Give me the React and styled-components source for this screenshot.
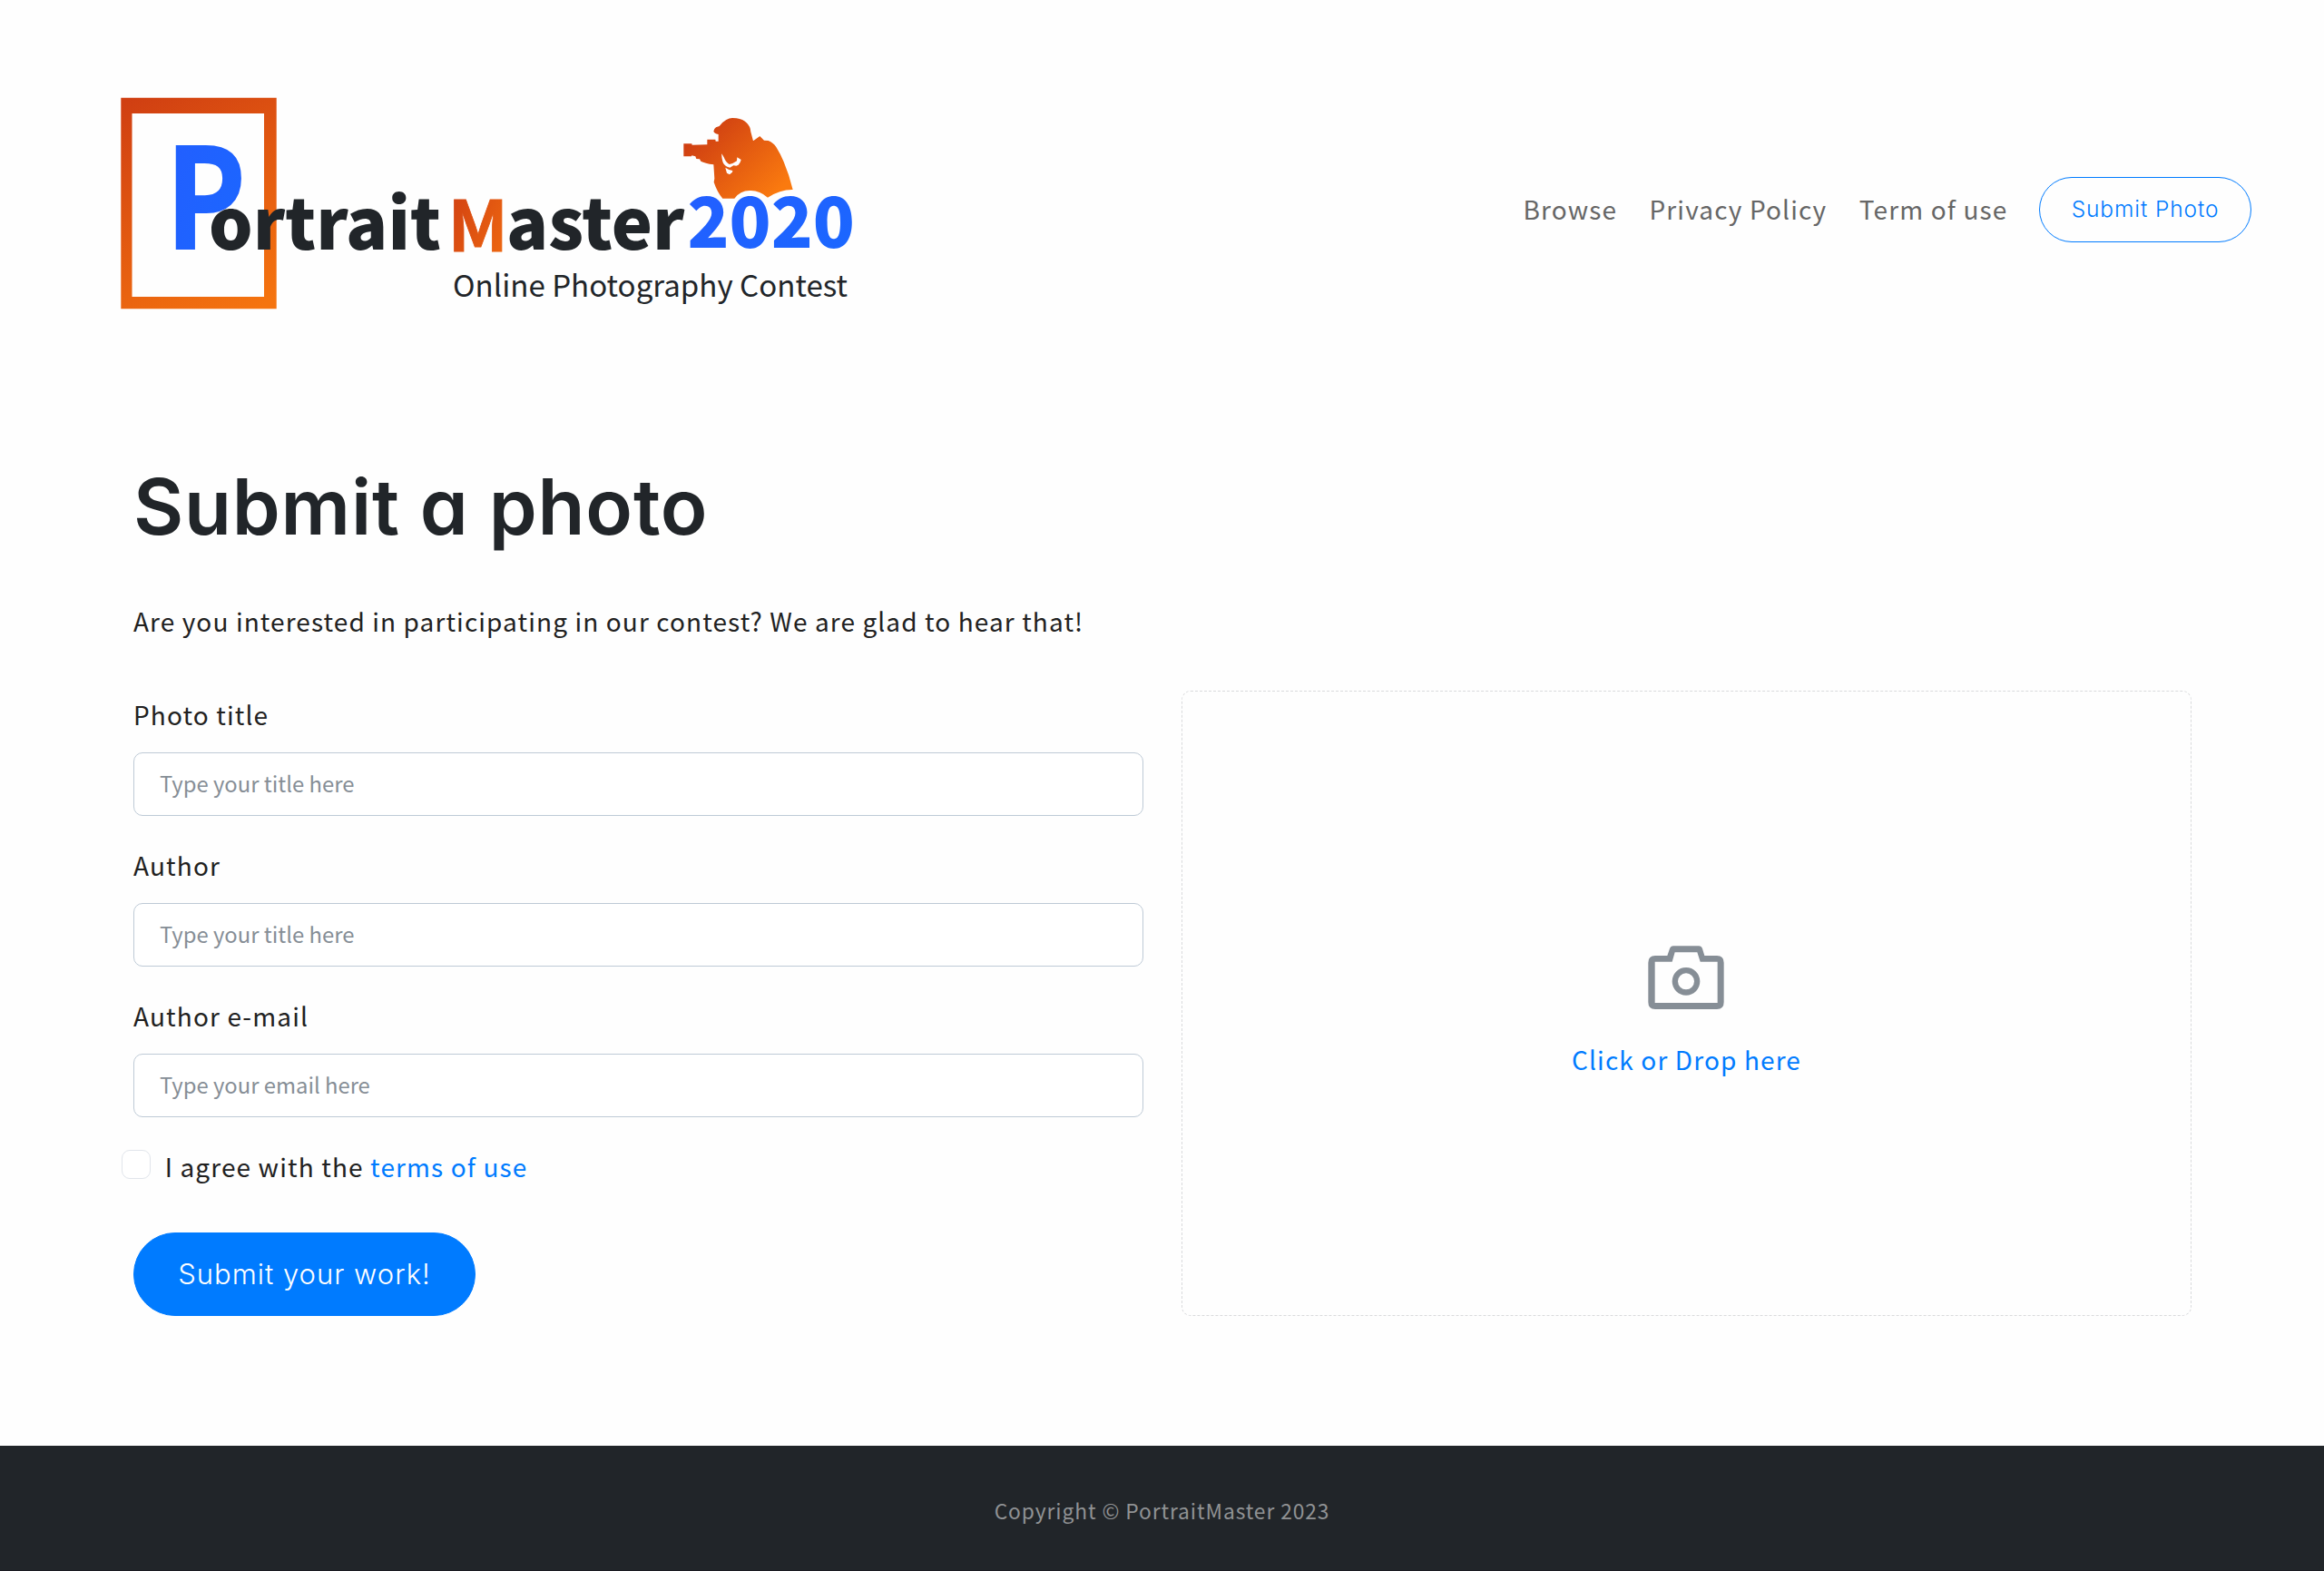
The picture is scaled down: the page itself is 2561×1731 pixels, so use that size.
import React from "react";
import styled, { createGlobalStyle } from "styled-components";

const sans = '"Noto Sans CJK JP", "Noto Sans", sans-serif';
const display = 'Inter, "Liberation Sans", sans-serif';

const GlobalStyle = createGlobalStyle`
  *, *::before, *::after { box-sizing: border-box; }
  body {
    margin: 0;
    background: #fefefe;
    color: #212121;
    font-family: ${sans};
    font-size: 28px;
    line-height: 40px;
    letter-spacing: 1.13px;
  }
`;

const Page = styled.div`
  display: flex;
  flex-direction: column;
  min-height: 1731px;
`;

const Header = styled.header`
  display: flex;
  align-items: center;
  justify-content: space-between;
  height: 462px;
  padding: 0 80px 0 130px;
`;

const LogoSvg = styled.svg`
  display: block;
  width: 820px;
  height: 262px;
  overflow: visible;
  font-family: ${sans};
  letter-spacing: 0;
`;

const Nav = styled.nav`
  display: flex;
  align-items: center;
  gap: 35.4px;
`;

const NavLink = styled.a`
  padding-bottom: 3px;
  color: #666;
  text-decoration: none;
  white-space: nowrap;
`;

const Pill = styled.button`
  display: flex;
  align-items: center;
  justify-content: center;
  padding: 0 0 2px;
  border: 1px solid #007bff;
  border-radius: 46px;
  font-family: ${display};
  font-weight: 300;
  white-space: nowrap;
`;

const OutlinePill = styled(Pill)`
  width: 234px;
  height: 72px;
  margin-left: -0.8px;
  background: transparent;
  color: #007bff;
  font-size: 24.5px;
  letter-spacing: 0.9px;
`;

const SolidPill = styled(Pill)`
  width: 377px;
  height: 92px;
  margin-top: auto;
  background: #007bff;
  color: #fff;
  font-size: 31px;
  letter-spacing: 1px;
`;

const Main = styled.main`
  flex: 1;
  padding: 47px 146px 0 147px;
`;

const Title = styled.h1`
  margin: 0;
  color: #212529;
  font-family: ${display};
  font-feature-settings: "cv11";
  font-size: 85px;
  font-weight: 600;
  line-height: 100px;
  letter-spacing: 0.75px;
`;

const Lead = styled.p`
  margin: 55px 0 0;
  letter-spacing: 1.1px;
`;

const FormGrid = styled.form`
  display: grid;
  grid-template-columns: 1fr 1fr;
  column-gap: 42px;
  height: 689px;
  margin-top: 57px;
`;

const Fields = styled.div`
  display: flex;
  flex-direction: column;
  align-items: flex-start;
  padding-top: 6px;
`;

const Field = styled.label`
  display: flex;
  flex-direction: column;
  gap: 22px;
  width: 100%;
  margin-bottom: 34px;
`;

const Input = styled.input`
  width: 100%;
  height: 70px;
  padding: 0 28px 3px;
  border: 1px solid #becad6;
  border-radius: 10px;
  background: #fff;
  font-family: ${sans};
  font-size: 23.8px;
  letter-spacing: 0;
  &::placeholder {
    color: #868e96;
    opacity: 1;
  }
`;

const Agreement = styled.label`
  display: flex;
  gap: 15.7px;
  margin-left: -13px;
`;

const Checkbox = styled.input`
  appearance: none;
  width: 32px;
  height: 32px;
  margin: 2px 0 0;
  border: 1px solid #e1e5eb;
  border-radius: 9px;
  background: #fff;
`;

const Link = styled.a`
  color: #007bff;
  text-decoration: none;
`;

const DropZone = styled.div`
  display: flex;
  flex-direction: column;
  align-items: center;
  justify-content: center;
  gap: 35px;
  padding: 17px 0 0;
  border: 1px dashed #d9dadc;
  border-radius: 10px;
  color: #007bff;
`;

const CameraSvg = styled.svg`
  display: block;
  width: 84px;
  height: 70px;
  margin-right: 1px;
`;

const Footer = styled.footer`
  display: flex;
  align-items: center;
  justify-content: center;
  height: 138px;
  padding-top: 6px;
  border-bottom: 1px solid #1b1c22;
  background: #212529;
  color: #909294;
  font-size: 22.8px;
  letter-spacing: 0.9px;
`;

function Logo() {
  return (
    <LogoSvg viewBox="130 100 820 262" role="img" aria-label="Portrait Master 2020">
      <defs>
        <linearGradient id="frame" gradientUnits="userSpaceOnUse" x1="145" y1="108" x2="285" y2="340">
          <stop offset="0" stopColor="#d03f12" />
          <stop offset="1" stopColor="#f5740f" />
        </linearGradient>
        <linearGradient id="figure" gradientUnits="userSpaceOnUse" x1="90" y1="60" x2="320" y2="290">
          <stop offset="0" stopColor="#cf3f12" />
          <stop offset="1" stopColor="#fa7a0f" />
        </linearGradient>
        <linearGradient id="initial" x1="0" y1="0.2" x2="1" y2="0.9">
          <stop offset="0" stopColor="#d03f12" />
          <stop offset="1" stopColor="#f06a10" />
        </linearGradient>
        <linearGradient id="blue" x1="0" y1="0" x2="1" y2="1">
          <stop offset="0" stopColor="#245dff" />
          <stop offset="1" stopColor="#1a68ff" />
        </linearGradient>
      </defs>
      <path
        fill="url(#frame)"
        fillRule="evenodd"
        d="M133.3 107.7H304.7V340.3H133.3ZM145.5 125V327H291V125Z"
      />
      <text x="182.4" y="274.2" fontSize="153" fontWeight="700" fill="url(#blue)" stroke="#1f62ff" strokeWidth="1.8" textLength="88.3" lengthAdjust="spacingAndGlyphs">P</text>
      <text x="230" y="275" fontSize="76.5" fontWeight="900" fill="#212529" textLength="256" lengthAdjust="spacingAndGlyphs">ortrait</text>
      <text x="493.5" y="277.4" fontSize="77.5" fontWeight="700" fill="url(#initial)" stroke="url(#initial)" strokeWidth="0.8" textLength="66.4" lengthAdjust="spacingAndGlyphs">M</text>
      <text x="558" y="275" fontSize="76.5" fontWeight="900" fill="#212529" textLength="196.5" lengthAdjust="spacingAndGlyphs">aster</text>
      <text x="757.5" y="272.7" fontSize="77.5" fontWeight="900" fill="url(#blue)" textLength="184.5" lengthAdjust="spacingAndGlyphs">2020</text>
      <text x="499" y="327" fontSize="33.1" fill="#212529" textLength="435" lengthAdjust="spacingAndGlyphs">Online Photography Contest</text>
      <path
        transform="translate(745 120) scale(0.33333)"
        fill="url(#figure)"
        fillRule="evenodd"
        d="M25 115H52L53 119L103 118V101H130L131 107H140V84Q126 81 124 74Q124 67 132 61L143 57Q152 44 166 36Q176 30 186 30L200 31Q222 34 233 46Q246 58 247 76L255 106L277 90L291 104L305 105Q322 112 331 126Q345 148 356 175Q375 220 386 267Q345 266 303 293Q275 268 243 270Q212 270 193 296H154Q136 275 125 242L127 230L124 184Q95 180 82 173L78 166L67 165L64 157L52 154L51 157H25Z
           M151 148L158 160Q165 178 176 183L187 180L201 172L202 160L215 168Q212 180 206 185L199 188L190 187L178 194Q158 190 154 174Q150 160 151 148Z
           M163 194L175 201L187 204L186 209L177 217L168 212Z"
      />
    </LogoSvg>
  );
}

function CameraIcon() {
  return (
    <CameraSvg viewBox="348 95 252 210" aria-hidden="true">
      <path
        fill="#868e96"
        fillRule="evenodd"
        d="M432 96H516Q525 96 528 105L535 128H576Q599 128 599 151V282Q599 305 576 305H372Q349 305 349 282V151Q349 128 372 128H412L420 105Q423 96 432 96ZM437 117L428 148H371V284H578V148H521L511 117Z"
      />
      <circle cx="474" cy="213" r="36.5" fill="none" stroke="#868e96" strokeWidth="19" />
    </CameraSvg>
  );
}

const fields = [
  { label: "Photo title", placeholder: "Type your title here" },
  { label: "Author", placeholder: "Type your title here" },
  { label: "Author e-mail", placeholder: "Type your email here" },
];

export default function App() {
  return (
    <Page>
      <GlobalStyle />
      <Header>
        <Logo />
        <Nav>
          <NavLink>Browse</NavLink>
          <NavLink>Privacy Policy</NavLink>
          <NavLink>Term of use</NavLink>
          <OutlinePill>Submit Photo</OutlinePill>
        </Nav>
      </Header>
      <Main>
        <Title>Submit a photo</Title>
        <Lead>Are you interested in participating in our contest? We are glad to hear that!</Lead>
        <FormGrid>
          <Fields>
            {fields.map((f) => (
              <Field key={f.label}>
                {f.label}
                <Input placeholder={f.placeholder} />
              </Field>
            ))}
            <Agreement>
              <Checkbox type="checkbox" />
              <span>
                I agree with the <Link>terms of use</Link>
              </span>
            </Agreement>
            <SolidPill type="button">Submit your work!</SolidPill>
          </Fields>
          <DropZone>
            <CameraIcon />
            <span>Click or Drop here</span>
          </DropZone>
        </FormGrid>
      </Main>
      <Footer>Copyright © PortraitMaster 2023</Footer>
    </Page>
  );
}
